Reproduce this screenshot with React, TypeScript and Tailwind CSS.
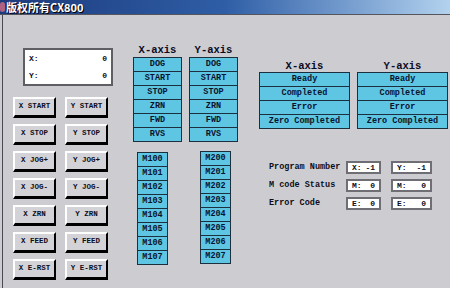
import React from 'react';

const mono = { fontFamily: '"Liberation Mono", "DejaVu Sans Mono", monospace' };

const xButtons = ['X START', 'X STOP', 'X JOG+', 'X JOG-', 'X ZRN', 'X FEED', 'X E-RST'];
const yButtons = ['Y START', 'Y STOP', 'Y JOG+', 'Y JOG-', 'Y ZRN', 'Y FEED', 'Y E-RST'];
const signals = ['DOG', 'START', 'STOP', 'ZRN', 'FWD', 'RVS'];
const states = ['Ready', 'Completed', 'Error', 'Zero Completed'];

function PanelButton({ label }: { label: string }) {
  return (
    <div className="w-[43px] h-[21px] bg-[#d3d3d7] border-t-2 border-l-2 border-t-white border-l-white border-r-2 border-b-[3px] border-r-black border-b-black flex items-center justify-center text-[7.5px] font-bold text-[#0d0d20] whitespace-nowrap">
      {label}
    </div>
  );
}

function CellStack({ items, width }: { items: string[]; width: string }) {
  return (
    <div className={`${width} flex flex-col border border-[#1b2f3f] bg-[#1b2f3f] gap-px`}>
      {items.map((it) => (
        <div key={it} className="h-[13px] bg-[#5ec6e2] flex items-center justify-center text-[8.5px] font-bold text-[#0a1430] whitespace-nowrap">
          {it}
        </div>
      ))}
    </div>
  );
}

function ValueBox({ tag, value, width }: { tag: string; value: string; width: string }) {
  return (
    <div className={`${width} h-[13px] bg-white border-2 border-[#6e6e74] flex items-center justify-between px-[4px] text-[8px] font-bold text-[#0d0d20]`}>
      <span>{tag}</span>
      <span>{value}</span>
    </div>
  );
}

export default function App() {
  return (
    <div className="w-[450px] h-[288px] overflow-hidden flex flex-col bg-[#cdcdd1]" style={mono}>
      {/* Title bar */}
      <div className="h-[15px] shrink-0 flex items-center bg-gradient-to-r from-[#1d3a7c] via-[#2f5ea6] to-[#b3d2ee] border-b border-[#55555e]">
        <div className="w-[5px] h-[10px] bg-[#b06080] rounded-sm" />
        <span
          className="ml-[1px] text-[11px] font-bold text-white leading-[14px]"
          style={{ fontFamily: '"Noto Sans CJK SC", "DejaVu Sans", sans-serif', textShadow: '1px 1px 0 #000' }}
        >
          版权所有CX800
        </span>
      </div>

      {/* Body */}
      <div className="flex-1 flex ml-[2px] border-l border-[#4a4a55] bg-[#cdcdd1]">
        {/* Left column */}
        <div className="w-[110px] flex flex-col pl-[10px]">
          <div className="mt-[33px] ml-[10px] w-[90px] h-[38px] bg-white border-2 border-[#5e5e64] flex flex-col justify-center gap-[5px] px-[4px] text-[8px] font-bold text-[#0d0d20]">
            <div className="flex justify-between"><span>X:</span><span>0</span></div>
            <div className="flex justify-between"><span>Y:</span><span>0</span></div>
          </div>
          <div className="mt-[11px] flex gap-[9px]">
            <div className="flex flex-col gap-[6px]">
              {xButtons.map((b) => <PanelButton key={b} label={b} />)}
            </div>
            <div className="flex flex-col gap-[6px]">
              {yButtons.map((b) => <PanelButton key={b} label={b} />)}
            </div>
          </div>
        </div>

        {/* Middle column */}
        <div className="ml-[20px] w-[105px] flex flex-col">
          <div className="mt-[28px] flex gap-[7px]">
            {['X', 'Y'].map((ax) => (
              <div key={ax} className="flex flex-col">
                <div className="h-[14px] text-center text-[10.5px] font-bold text-[#0a0a24] leading-[14px]">{ax}-axis</div>
                <CellStack items={signals} width="w-[49px]" />
              </div>
            ))}
          </div>
          <div className="mt-[10px] ml-[4px] flex gap-[32px]">
            <CellStack items={['M100', 'M101', 'M102', 'M103', 'M104', 'M105', 'M106', 'M107']} width="w-[31px]" />
            <div className="-mt-[1px]">
              <CellStack items={['M200', 'M201', 'M202', 'M203', 'M204', 'M205', 'M206', 'M207']} width="w-[31px]" />
            </div>
          </div>
        </div>

        {/* Right column */}
        <div className="ml-[21px] w-[189px] flex flex-col">
          <div className="mt-[45px] flex gap-[7px]">
            {['X', 'Y'].map((ax) => (
              <div key={ax} className="flex flex-col">
                <div className="h-[12px] text-center text-[10.5px] font-bold text-[#0a0a24] leading-[12px]">{ax}-axis</div>
                <CellStack items={states} width="w-[91px]" />
              </div>
            ))}
          </div>
          <div className="mt-[32px] pl-[10px] flex flex-col gap-[5px] text-[8.5px] font-bold text-[#0d0d20]">
            {[
              ['Program Number', 'X:', '-1', 'Y:', '-1'],
              ['M code Status', 'M:', '0', 'M:', '0'],
              ['Error Code', 'E:', '0', 'E:', '0'],
            ].map(([label, t1, v1, t2, v2]) => (
              <div key={label} className="flex items-center">
                <span className="w-[77px] whitespace-nowrap">{label}</span>
                <ValueBox tag={t1} value={v1} width="w-[35px]" />
                <div className="w-[10px]" />
                <ValueBox tag={t2} value={v2} width="w-[41px]" />
              </div>
            ))}
          </div>
        </div>
      </div>
    </div>
  );
}
